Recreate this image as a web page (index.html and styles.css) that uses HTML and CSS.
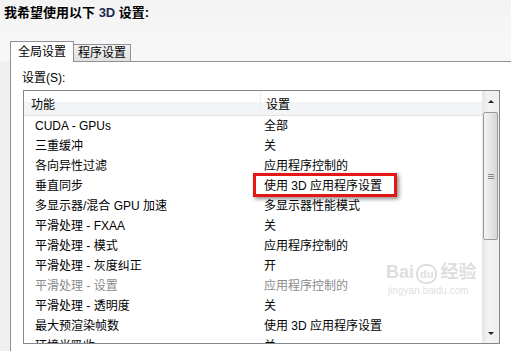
FILE: index.html
```html
<!DOCTYPE html>
<html lang="zh-CN">
<head>
  <meta charset="UTF-8">
  <title>管理 3D 设置</title>
  <link rel="stylesheet" href="styles.css">
</head>
<body>
  <div class="title">我希望使用以下 <span class="d3">3D</span> 设置:</div>

  <div class="tabs">
    <div class="tab active">全局设置</div>
    <div class="tab">程序设置</div>
  </div>

  <div class="panel">
    <div class="label">设置(S):</div>

    <div class="listbox">
      <div class="list">
        <div class="head">
          <div class="h1">功能</div>
          <div class="h2">设置</div>
        </div>
        <div class="row"><div class="c1">CUDA - GPUs</div><div class="c2">全部</div></div>
        <div class="row"><div class="c1">三重缓冲</div><div class="c2">关</div></div>
        <div class="row"><div class="c1">各向异性过滤</div><div class="c2">应用程序控制的</div></div>
        <div class="row"><div class="c1">垂直同步</div><div class="c2 marked">使用 3D 应用程序设置<span class="mark"></span></div></div>
        <div class="row"><div class="c1">多显示器/混合 GPU 加速</div><div class="c2">多显示器性能模式</div></div>
        <div class="row"><div class="c1">平滑处理 - FXAA</div><div class="c2">关</div></div>
        <div class="row"><div class="c1">平滑处理 - 模式</div><div class="c2">应用程序控制的</div></div>
        <div class="row"><div class="c1">平滑处理 - 灰度纠正</div><div class="c2">开</div></div>
        <div class="row off"><div class="c1">平滑处理 - 设置</div><div class="c2">应用程序控制的</div></div>
        <div class="row"><div class="c1">平滑处理 - 透明度</div><div class="c2">关</div></div>
        <div class="row"><div class="c1">最大预渲染帧数</div><div class="c2">使用 3D 应用程序设置</div></div>
        <div class="row"><div class="c1">环境光吸收</div><div class="c2">关</div></div>

        <div class="watermark">
          <div class="wm-top">Bai<span class="paw">du</span>经验</div>
          <div class="wm-url">jingyan.baidu.com</div>
        </div>
      </div>

      <div class="scrollbar">
        <div class="arrow up"></div>
        <div class="thumb"><span class="grip"></span></div>
        <div class="track"></div>
        <div class="arrow down"></div>
      </div>
    </div>
  </div>
</body>
</html>
```

FILE: styles.css
```css
body {
  margin: 0;
  height: 351px;
  overflow: hidden;
  background: #f0f0f0;
  font-family: "Liberation Sans", "Noto Sans CJK SC", sans-serif;
  font-size: 12px;
  color: #000;
}

.title {
  height: 41px;
  box-sizing: border-box;
  padding: 5px 0 0 4px;
  font-size: 13px;
  line-height: 16px;
  font-weight: bold;
  background: linear-gradient(#f3f3f3, #f7f7f7);
}

.title .d3 {
  color: #1b2a55;
}

.tabs {
  display: flex;
  align-items: flex-end;
  height: 20px;
  padding-left: 10px;
  background: #f7f7f7;
  position: relative;
  z-index: 1;
}

.tab {
  box-sizing: border-box;
  border: 1px solid #8e9196;
  border-bottom: none;
  line-height: 16px;
}

.tab.active {
  width: 64px;
  height: 21px;
  margin-bottom: -1px;
  padding: 2px 0 0 7px;
  background: #fff;
}

.tab:not(.active) {
  width: 57px;
  height: 17px;
  border-left: none;
  padding: 0 0 0 4px;
  background: linear-gradient(#f2f2f2, #e0e0e0);
}

.panel {
  height: 290px;
  margin-left: 10px;
  border-top: 1px solid #8e9196;
  border-left: 1px solid #8e9196;
  background: #fff;
}

.label {
  padding: 9px 0 0 11px;
  line-height: 14px;
}

.listbox {
  display: flex;
  width: 477px;
  height: 254px;
  box-sizing: border-box;
  margin: 5px 0 0 12px;
  border: 1px solid #828790;
  overflow: hidden;
}

.list {
  flex: 1;
  position: relative;
  overflow: hidden;
}

.head {
  display: flex;
  height: 24px;
  border-bottom: 1px solid #e3e4e6;
  background: linear-gradient(#fff 0 45%, #f3f4f6 45%);
  line-height: 20px;
}

.h1 {
  width: 229px;
  padding: 4px 0 0 7px;
  border-right: 1px solid #eceef0;
}

.h2 {
  padding: 4px 0 0 5px;
}

.row {
  display: flex;
  height: 20px;
  line-height: 20px;
  white-space: nowrap;
}

.c1 {
  width: 229px;
  padding-left: 11px;
}

.c2 {
  padding-left: 0;
}

.row.off {
  color: #8a8a8a;
}

.marked {
  position: relative;
}

.mark {
  position: absolute;
  left: -11px;
  top: -3px;
  width: 144px;
  height: 24px;
  box-sizing: border-box;
  border: 3px solid #e51616;
  box-shadow: 2px 2px 4px rgba(0, 0, 0, 0.45);
}

.watermark {
  position: absolute;
  left: 362px;
  top: 170px;
  white-space: nowrap;
  color: rgba(190, 190, 190, 0.5);
  pointer-events: none;
}

.wm-top {
  font-size: 18px;
  font-weight: bold;
  line-height: 22px;
}

.paw {
  display: inline-block;
  font-size: 11px;
  line-height: 16px;
  padding: 0 2px;
  margin: 0 3px 0 2px;
  border: 2px solid rgba(190, 190, 190, 0.5);
  border-radius: 9px;
}

.wm-url {
  font-size: 10px;
  line-height: 13px;
  margin-left: 2px;
}

.scrollbar {
  width: 17px;
  display: flex;
  flex-direction: column;
  background: linear-gradient(90deg, #e6e6e6, #f3f3f3 40%, #eeeeee);
}

.arrow {
  height: 20px;
  display: flex;
  align-items: center;
  justify-content: center;
}

.arrow::before {
  content: '';
  border-left: 3px solid transparent;
  border-right: 3px solid transparent;
}

.arrow.up::before {
  border-bottom: 3px solid #222;
}

.arrow.down::before {
  border-top: 3px solid #222;
}

.thumb {
  height: 128px;
  margin: 1px 1px 0 1px;
  box-sizing: border-box;
  border: 1px solid #9a9a9a;
  border-radius: 2px;
  background: linear-gradient(90deg, #f4f4f4, #e6e6e6 50%, #d6d6d6);
  display: flex;
  align-items: center;
  justify-content: center;
}

.grip {
  width: 6px;
  height: 5px;
  border-top: 1px solid #888;
  border-bottom: 1px solid #888;
  box-sizing: border-box;
  background: linear-gradient(#888, #888) 0 1px / 6px 1px no-repeat;
}

.track {
  flex: 1;
}
```
